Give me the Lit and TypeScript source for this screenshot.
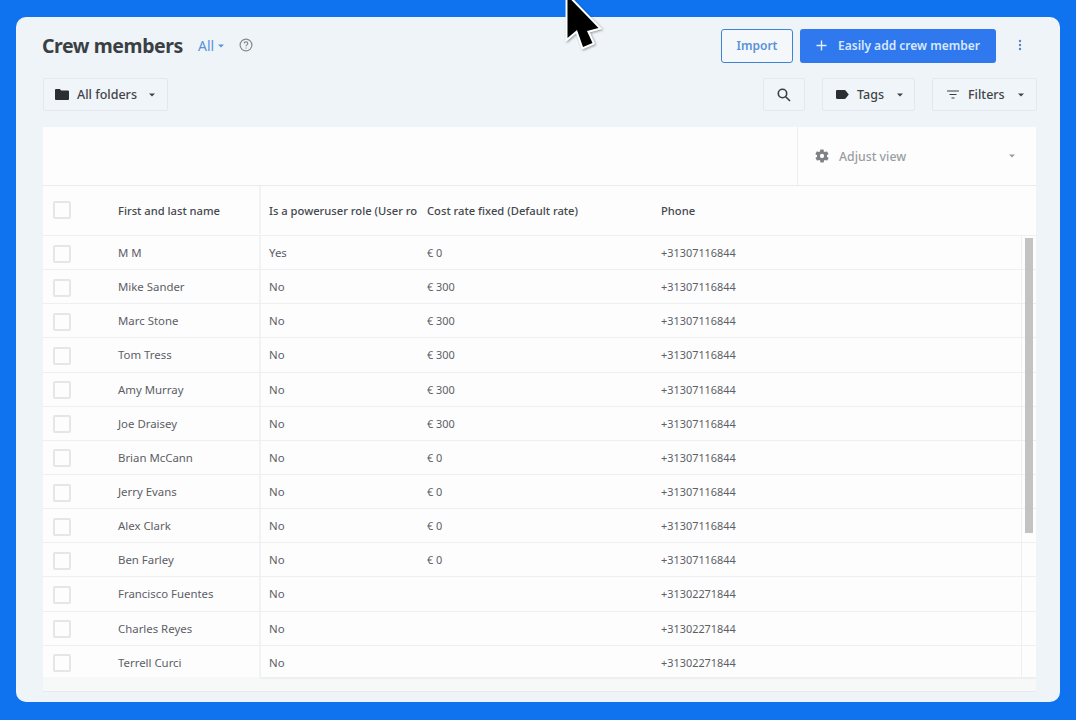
import { LitElement, html, css } from "lit";
import { customElement } from "lit/decorators.js";

const rows: [string, string, string, string][] = [
  ["M M", "Yes", "€ 0", "+31307116844"],
  ["Mike Sander", "No", "€ 300", "+31307116844"],
  ["Marc Stone", "No", "€ 300", "+31307116844"],
  ["Tom Tress", "No", "€ 300", "+31307116844"],
  ["Amy Murray", "No", "€ 300", "+31307116844"],
  ["Joe Draisey", "No", "€ 300", "+31307116844"],
  ["Brian McCann", "No", "€ 0", "+31307116844"],
  ["Jerry Evans", "No", "€ 0", "+31307116844"],
  ["Alex Clark", "No", "€ 0", "+31307116844"],
  ["Ben Farley", "No", "€ 0", "+31307116844"],
  ["Francisco Fuentes", "No", "", "+31302271844"],
  ["Charles Reyes", "No", "", "+31302271844"],
  ["Terrell Curci", "No", "", "+31302271844"],
];

const caret = html`<svg class="caret" width="6" height="4" viewBox="0 0 6 4"><path d="M0 0.500h6L3 3.600z" fill="currentColor"/></svg>`;

@customElement("app-root")
export class AppRoot extends LitElement {
  static styles = css`
    :host { display: block; width: 1076px; height: 720px; box-sizing: border-box; padding: 17px 16px 18px; background: #0f73f0; font-family: "Noto Sans", "Open Sans", sans-serif; color: #3f4347; position: relative; overflow: hidden; }
    svg { flex: none; }
    .card { height: 685px; box-sizing: border-box; background: #eff4f8; border-radius: 10px; padding: 12px 24px 0 26px; display: flex; flex-direction: column; overflow: hidden; }
    .top { display: flex; align-items: center; height: 34px; flex: none; }
    h1 { margin: 0; font-size: 19.5px; line-height: 34px; font-weight: 700; color: #3a3f44; letter-spacing: -0.42px; }
    .all { margin-left: 15px; font-size: 14px; color: #5a92d8; display: flex; align-items: center; gap: 4px; margin-top: -1px; }
    .help { margin-left: 15px; display: block; margin-top: -2px; }
    .spacer { flex: 1; }
    .import { width: 72px; height: 34px; box-sizing: border-box; border: 1px solid #3f83d6; border-radius: 3px; background: #f4f8fb; color: #5a92d8; font-size: 12px; font-weight: 600; display: flex; align-items: center; justify-content: center; margin-top: -1px; }
    .add { margin-left: 7px; width: 196px; height: 34px; box-sizing: border-box; background: #2f78ee; border-radius: 3px; color: #d9e9fb; font-size: 12px; font-weight: 600; display: flex; align-items: center; padding-left: 16px; gap: 11px; margin-top: -1px; }
    .dots { margin-left: 22px; margin-right: 14px; display: block; margin-top: -2px; }
    .tools { display: flex; align-items: center; gap: 17px; height: 33px; margin-top: 15px; flex: none; padding: 0 0 0 1px; }
    .tbtn { height: 33px; box-sizing: border-box; border: 1px solid #e4e8ec; border-radius: 2px; background: #f0f5f9; display: flex; align-items: center; font-size: 12.5px; font-weight: 500; color: #3f4347; padding: 0 14px; white-space: nowrap; }
    .folders { width: 125px; gap: 8px; padding-left: 11px; }
    .folders .caret { margin-left: 4px; }
    .search { width: 42px; padding: 0; justify-content: center; }
    .tags { width: 93px; gap: 8px; padding-left: 13px; }
    .tags .caret { margin-left: 5px; }
    .filters { width: 105px; gap: 9px; margin-right: -1px; padding-left: 14px; }
    .filters .caret { margin-left: 4px; }
    .panel { margin: 16px 0 10px 1px; width: 993px; flex: 1; min-height: 0; background: #fdfdfe; display: flex; flex-direction: column; }
    .bar { height: 59px; box-sizing: border-box; flex: none; display: flex; justify-content: flex-end; border-bottom: 1px solid #e9ebed; }
    .adjust { width: 239px; box-sizing: border-box; border-left: 1px solid #ebedef; display: flex; align-items: center; padding: 0 21px 0 16px; gap: 9px; font-size: 12.3px; color: #9a9da0; font-weight: 500; }
    .adjust .caret { margin-left: auto; }
    .body { flex: 1; min-height: 0; position: relative; overflow: hidden; }
    .row { display: grid; grid-template-columns: 75px 141px 168px 234px 1fr; align-items: center; height: 34.15px; box-sizing: border-box; border-bottom: 1px solid #eeeff1; font-size: 11.4px; color: #5c6065; }
    .head { height: 50px; font-size: 11.2px; font-weight: 500; color: #44484c; padding-bottom: 1px; }
    .row > div:nth-child(3) { border-left: 2px solid #f1f2f3; padding-left: 8px; height: 100%; display: flex; align-items: center; box-sizing: border-box; }
    .num { font-size: 10.9px; }
    .box { width: 18px; height: 18px; box-sizing: border-box; border: 2px solid #e5e6e8; border-radius: 2px; margin: 2px 0 0 10px; }
    .head .box { margin-top: 0; }
    .thumb { position: absolute; left: 982px; top: 52px; width: 8px; height: 295px; background: #c3c3c3; }
    .gutter { position: absolute; left: 978px; top: 50px; bottom: 0; width: 1px; background: #efeff0; }
    .foot { height: 15px; flex: none; box-sizing: border-box; background: #f7f8f8; border-bottom: 1px solid #e7e9eb; }
    .foot div { margin-left: 217px; height: 2px; background: #eeeff0; }
    .cursor { position: absolute; left: 555px; top: 0; display: block; filter: drop-shadow(1px 1px 1px rgba(0,0,0,0.35)); }
  `;

  render() {
    return html`
      <div class="card">
        <div class="top">
          <h1>Crew members</h1>
          <div class="all">All ${caret}</div>
          <svg class="help" width="14" height="14" viewBox="0 0 14 14" fill="none" stroke="#85898d" stroke-width="1.200"><circle cx="7" cy="7" r="5.900"/><path d="M5.200 5.600c0-1 .8-1.700 1.800-1.700s1.800.7 1.800 1.600c0 1.300-1.800 1.400-1.800 2.700"/><path d="M7 9.400v1.100"/></svg>
          <div class="spacer"></div>
          <div class="import">Import</div>
          <div class="add">
            <svg width="11" height="11" viewBox="0 0 11 11" stroke="#e3eefc" stroke-width="1.400"><path d="M5.500 0.500v10M0.500 5.500h10"/></svg>
            <span>Easily add crew member</span>
          </div>
          <svg class="dots" width="4" height="12" viewBox="0 0 4 12" fill="#5a85bd"><circle cx="2" cy="2" r="1.200"/><circle cx="2" cy="6" r="1.200"/><circle cx="2" cy="10" r="1.200"/></svg>
        </div>
        <div class="tools">
          <div class="tbtn folders">
            <svg width="14" height="11" viewBox="0 0 14 11" fill="#2b2f33"><path d="M0 1.200C0 .5.500 0 1.200 0h3.600l1.400 1.500h6.600c.7 0 1.200.5 1.200 1.200v7c0 .7-.5 1.300-1.200 1.300H1.200C.5 11 0 10.400 0 9.700z"/></svg>
            <span>All folders</span>${caret}
          </div>
          <div class="spacer"></div>
          <div class="tbtn search">
            <svg width="14" height="14" viewBox="0 0 14 14" fill="none" stroke="#3a3e42" stroke-width="1.600"><circle cx="5.500" cy="5.500" r="4.200"/><path d="M8.700 8.700l4.300 4.300"/></svg>
          </div>
          <div class="tbtn tags">
            <svg width="13" height="9" viewBox="0 0 13 9" fill="#2b2f33"><path d="M0 1.200C0 .5.500 0 1.200 0h7.300c.4 0 .8.200 1.100.5L12.800 4.500 9.600 8.500c-.3.300-.7.500-1.100.5H1.200C.5 9 0 8.500 0 7.800z"/></svg>
            <span>Tags</span>${caret}
          </div>
          <div class="tbtn filters">
            <svg width="12" height="9" viewBox="0 0 12 9" stroke="#3a3e42" stroke-width="1.200"><path d="M0 1h12M2.500 4.500h7M4.500 8h3"/></svg>
            <span>Filters</span>${caret}
          </div>
        </div>
        <div class="panel">
          <div class="bar">
            <div class="adjust">
              <svg width="16" height="16" viewBox="0 0 24 24" fill="#7f8285"><path fill-rule="evenodd" d="M19.400 13a7.500 7.500 0 0 0 0-2l2.100-1.600a.5.500 0 0 0 .1-.6l-2-3.500a.5.500 0 0 0-.6-.2l-2.500 1a7.400 7.400 0 0 0-1.700-1l-.4-2.600a.5.500 0 0 0-.5-.4h-4a.5.500 0 0 0-.5.400l-.4 2.600a7.400 7.400 0 0 0-1.700 1l-2.500-1a.5.500 0 0 0-.6.200l-2 3.500a.5.500 0 0 0 .1.600L4.600 11a7.500 7.500 0 0 0 0 2l-2.100 1.600a.5.500 0 0 0-.1.600l2 3.500c.1.200.4.300.6.200l2.500-1c.5.400 1.100.7 1.700 1l.4 2.600c0 .2.300.4.500.4h4c.2 0 .5-.2.500-.4l.4-2.600c.6-.3 1.200-.6 1.700-1l2.500 1c.2.100.5 0 .6-.2l2-3.500a.5.500 0 0 0-.1-.6zM12 15.200a3.200 3.200 0 1 1 0-6.400 3.200 3.200 0 0 1 0 6.400z"/></svg>
              <span>Adjust view</span>${caret}
            </div>
          </div>
          <div class="body">
            <div class="row head">
              <div><div class="box"></div></div>
              <div>First and last name</div>
              <div><span>Is a poweruser role (User ro</span></div>
              <div>Cost rate fixed (Default rate)</div>
              <div>Phone</div>
            </div>
            ${rows.map(
              (r) => html`<div class="row">
                <div><div class="box"></div></div>
                <div>${r[0]}</div>
                <div>${r[1]}</div>
                <div class="num">${r[2]}</div>
                <div class="num">${r[3]}</div>
              </div>`
            )}
            <div class="gutter"></div>
            <div class="thumb"></div>
          </div>
          <div class="foot"><div></div></div>
        </div>
      </div>
      <svg class="cursor" width="50" height="56" viewBox="555 0 50 56">
        <path d="M567.500 -4L598.500 28L587 31L592.500 43L583 47L577 30L567.500 38Z" fill="#000" stroke="#fff" stroke-width="4" stroke-linejoin="miter" paint-order="stroke"/>
      </svg>
    `;
  }
}
